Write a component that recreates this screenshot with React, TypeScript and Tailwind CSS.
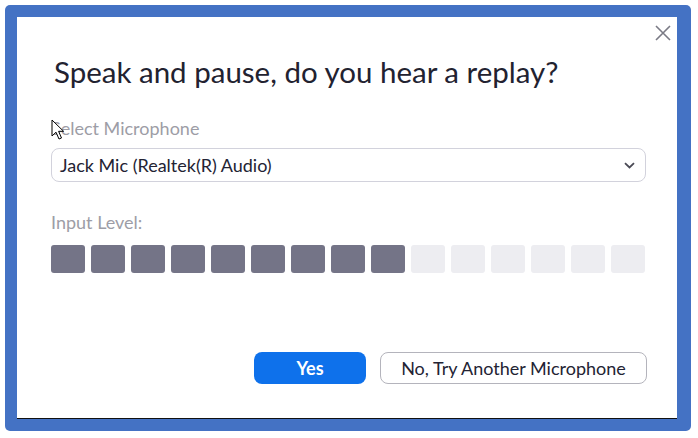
import React from "react";

const LEVEL = 9;
const BARS = 15;

function CloseIcon() {
  return (
    <svg width="16" height="16" viewBox="0 0 16 16" fill="none">
      <path d="M1 1L15 15M15 1L1 15" stroke="#7a7a85" strokeWidth="1.6" />
    </svg>
  );
}

function Chevron() {
  return (
    <svg width="11" height="7" viewBox="0 0 11 7" fill="none">
      <path d="M1 1.2L5.5 5.5L10 1.2" stroke="#4a4a55" strokeWidth="1.8" />
    </svg>
  );
}

// Mouse pointer sitting over the label
function Pointer() {
  return (
    <svg width="14" height="22" viewBox="0 0 14 22" className="absolute left-[34px] top-[102px]">
      <path
        d="M1 1L1 17L5 13.2L8 20L10.5 19L7.6 12.3L12.6 12.3Z"
        fill="white"
        stroke="black"
        strokeWidth="1"
        strokeLinejoin="round"
      />
    </svg>
  );
}

export default function App() {
  return (
    <div className="w-[698px] h-[438px] bg-white p-[5px] font-['Lato','Liberation_Sans',sans-serif]">
      <div className="w-[686px] h-[426px] rounded-[5px] bg-[#4472c4] pt-[12px] pl-[12px] pr-[14px] pb-[12px]">
        <div className="relative flex flex-col w-[660px] h-[402px] bg-white border-b border-[#111] pl-[34px] pr-[30px] pb-[34px]">
          <button className="absolute right-[6px] top-[8px] w-[16px] h-[16px] flex items-center justify-center">
            <CloseIcon />
          </button>

          <h1 className="mt-[37px] ml-[3px] text-[29.5px] leading-[36px] text-[#222230] font-normal">
            Speak and pause, do you hear a replay?
          </h1>

          <div className="mt-[28px] text-[18px] leading-[20px] text-[#9d9da6]">Select Microphone</div>

          <div className="mt-[10px] mr-[1px] h-[34px] flex items-center justify-between rounded-[8px] border border-[#d2d2dc] pl-[8px] pr-[10px] text-[18px] text-[#232333]">
            <span>Jack Mic (Realtek(R) Audio)</span>
            <Chevron />
          </div>

          <div className="mt-[30px] text-[18px] leading-[20px] text-[#9d9da6]">Input Level:</div>

          <div className="mt-[13px] flex gap-[6px]">
            {Array.from({ length: BARS }).map((_, i) => (
              <div
                key={i}
                className={
                  i < LEVEL
                    ? "w-[34px] h-[28px] rounded-[3px] bg-[#747487]"
                    : "w-[34px] h-[28px] rounded-[3px] bg-[#ededf1]"
                }
              />
            ))}
          </div>

          <div className="mt-auto flex justify-end gap-[14px]">
            <button className="w-[112px] h-[32px] rounded-[8px] bg-[#0e71eb] text-white text-[18px] font-bold">
              Yes
            </button>
            <button className="w-[267px] h-[32px] rounded-[8px] border border-[#b4b4bc] bg-white text-[18px] text-[#232333]">
              No, Try Another Microphone
            </button>
          </div>

          <Pointer />
        </div>
      </div>
    </div>
  );
}
